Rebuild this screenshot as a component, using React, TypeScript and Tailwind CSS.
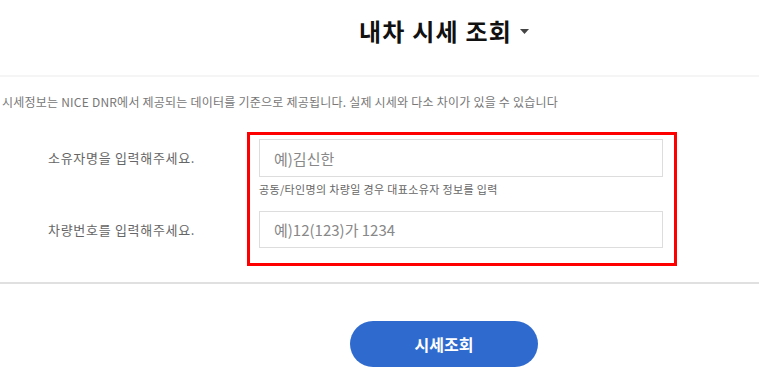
import React from "react";

const font = { fontFamily: '"Noto Sans CJK KR", "Noto Sans", sans-serif' };

export default function App() {
  return (
    <div className="w-[759px] h-[380px] bg-white overflow-hidden" style={font}>
      <div className="h-[77px] border-b-2 border-[#f5f5f5] flex items-center pl-[359px]">
        <h1 className="text-[24px] font-bold text-[#111] tracking-[1.2px] leading-none -mt-[14px]">내차 시세 조회</h1>
        <svg width="9" height="5" viewBox="0 0 9 5" className="ml-[8px] -mt-[12px]">
          <polygon points="0,0 9,0 4.5,5" fill="#444" />
        </svg>
      </div>
      <p className="pl-[2px] mt-[16px] text-[12px] leading-[18px] text-[#777] tracking-[0.22px]">
        시세정보는 NICE DNR에서 제공되는 데이터를 기준으로 제공됩니다. 실제 시세와 다소 차이가 있을 수 있습니다
      </p>
      <div className="flex mt-[21px]">
        <div className="w-[247px] pl-[48px] pt-[7px] flex flex-col text-[13px] text-[#666] tracking-[0.7px]">
          <div className="h-[38px] flex items-center">소유자명을 입력해주세요.</div>
          <div className="h-[37px] mt-[34px] flex items-center">차량번호를 입력해주세요.</div>
        </div>
        <div className="w-[430px] border-[3px] border-[#ff0000] pt-[4px] pb-[15px] pl-[9px] pr-[10px]">
          <input
            className="w-[404px] h-[38px] border border-[#dddddd] px-[14px] text-[15px] text-[#333] placeholder:text-[#888] outline-none"
            placeholder="예)김신한"
          />
          <div className="text-[11px] text-[#666] leading-[16px] mt-[4px] tracking-[0.35px]">공동/타인명의 차량일 경우 대표소유자 정보를 입력</div>
          <input
            className="w-[404px] h-[37px] mt-[14px] border border-[#dddddd] px-[14px] text-[15px] text-[#333] placeholder:text-[#888] outline-none"
            placeholder="예)12(123)가 1234"
          />
        </div>
      </div>
      <div className="mt-[16px] border-t-2 border-[#e0e0e0]" />
      <div className="pl-[350px] mt-[37px]">
        <button className="w-[188px] h-[46px] rounded-full bg-[#2f6bcf] text-white text-[16px] font-bold">시세조회</button>
      </div>
    </div>
  );
}
